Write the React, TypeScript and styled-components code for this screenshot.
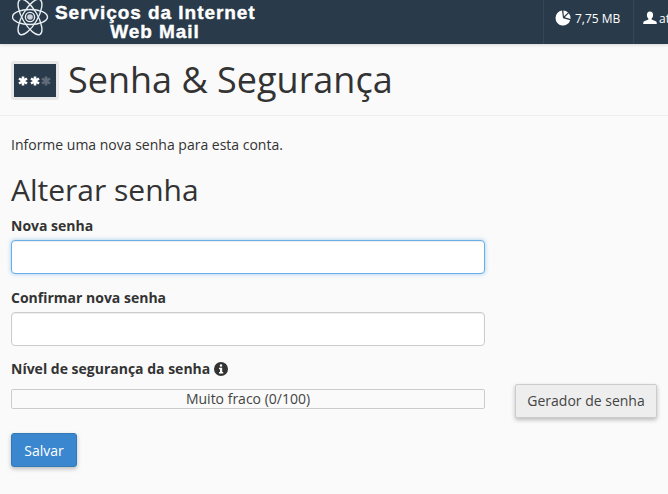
import React from "react";
import styled, { createGlobalStyle } from "styled-components";

const Global = createGlobalStyle`
  html, body { margin: 0; padding: 0; background: #fafafa; overflow: hidden; }
  body { font-family: "Open Sans", sans-serif; color: #333; font-size: 14px; }
  * { box-sizing: border-box; }
`;
const Page = styled.div`width: 668px; height: 494px; overflow: hidden;`;
const TopBar = styled.header`
  height: 44px; background: #293a4a; display: flex; align-items: stretch; justify-content: space-between;
  box-shadow: 0 1px 3px rgba(0,0,0,.15); overflow: hidden;
`;
const Brand = styled.div`display: flex; align-items: flex-start; padding-left: 12px;`;
const BrandText = styled.div`
  font-family: "Liberation Sans", Arial, sans-serif; font-weight: 700; color: #fff; font-size: 19px; line-height: 19px;
  text-align: center; letter-spacing: 0.95px; margin-left: 5px; padding-top: 3px; width: 200px; white-space: nowrap;
  -webkit-text-stroke: 0.4px #fff;
`;
const Stats = styled.div`display: flex; width: 125px; flex: none;`;
const Stat = styled.div<{ $w: number; $pad: number; $gap: number }>`
  width: ${p => p.$w}px; flex: none; border-left: 1px solid #34475a; color: #fff; font-size: 12px;
  display: flex; align-items: center; padding: 0 0 8px ${p => p.$pad}px; gap: ${p => p.$gap}px; white-space: nowrap; overflow: hidden;
  & > svg { flex: none; }
`;
const Main = styled.main`padding: 0 11px;`;
const TitleRow = styled.div`
  display: flex; align-items: center; gap: 9px; height: 72px; padding-top: 1px; margin: 0 -11px; padding-left: 11px;
  border-bottom: 1px solid #eee;
`;
const IconFrame = styled.div`
  width: 48px; height: 39px; background: #e8e8e8; border-radius: 3px; padding: 3px; flex: none;
`;
const IconScreen = styled.div`
  height: 33px; background: #293a4a; display: flex; align-items: center; justify-content: center; padding-top: 2px;
`;
const Title = styled.h1`margin: 0; font-size: 36px; font-weight: 400; line-height: 40px; color: #333;`;
const Intro = styled.p`margin: 19px 0 0; font-size: 14px; line-height: 20px;`;
const SubTitle = styled.h2`margin: 18px 0 0; font-size: 30px; font-weight: 400; line-height: 33px;`;
const Field = styled.div`margin-top: 10px; width: 474px; & + & { margin-top: 14px; }`;
const Label = styled.label`display: block; font-weight: 700; font-size: 14px; line-height: 20px; margin-bottom: 4px;`;
const Input = styled.div<{ $focus?: boolean }>`
  height: 34px; background: #fff; border: 1px solid ${p => p.$focus ? "#66afe9" : "#ccc"}; border-radius: 4px;
  box-shadow: ${p => p.$focus ? "inset 0 1px 1px rgba(0,0,0,.075), 0 0 4px rgba(102,175,233,.6)" : "inset 0 1px 1px rgba(0,0,0,.075)"};
`;
const StrengthRow = styled.div`display: flex; align-items: flex-start; margin-top: 13px;`;
const StrengthCol = styled.div`width: 474px; flex: none;`;
const StrengthLabel = styled(Label)`display: flex; align-items: center; gap: 4px; margin-bottom: 10px;`;
const Meter = styled.div`
  height: 20px; border: 1px solid #ccc; border-radius: 2px; text-align: center; font-size: 14px; line-height: 18px; color: #444;
`;
const GenButton = styled.button`
  margin: 25px 0 0 30px; width: 143px; height: 34px; background: #eee; border: 1px solid #ccc; border-radius: 2px;
  font: 400 14px "Open Sans", sans-serif; color: #444; box-shadow: 0 2px 4px rgba(0,0,0,.25); padding: 0 0 2px;
`;
const SaveButton = styled.button`
  display: block; margin-top: 15px; width: 66px; height: 34px; background: #3a87cf; border: 1px solid #337ab7; border-radius: 3px;
  font: 400 14px "Open Sans", sans-serif; color: #fff; box-shadow: 0 2px 4px rgba(0,0,0,.25); padding: 0;
`;

const Atom = () => (
  <svg width="38" height="44" viewBox="0 0 38 44" fill="none" stroke="#e8edf1" strokeWidth="1.4" style={{ flex: "none" }}>
    <ellipse cx="18" cy="17" rx="17.5" ry="7.5" />
    <ellipse cx="18" cy="17" rx="20" ry="7.5" transform="rotate(60 18 17)" />
    <ellipse cx="18" cy="17" rx="20" ry="7.5" transform="rotate(-60 18 17)" />
    <circle cx="18" cy="17" r="4.6" />
    <circle cx="18" cy="17" r="2.8" fill="#c9d2da" stroke="none" />
  </svg>
);
const Stars = () => (
  <svg width="34" height="12" viewBox="0 0 34 12" strokeWidth="2.6" strokeLinecap="butt">
    {[5, 17, 28].map((x, i) => (
      <g key={x} stroke={i === 2 ? "#5f6b76" : "#fff"}>
        <path d={`M${x} 1.5V10.5M${x - 4} 3.5L${x + 4} 8.5M${x - 4} 8.5L${x + 4} 3.5`} />
      </g>
    ))}
  </svg>
);
const Pie = () => (
  <svg width="16" height="16" viewBox="0 0 16 16" fill="#fff">
    <path d="M7 0.6A7.5 7.5 0 1 0 15.2 10.2L8 8.2Z" />
    <path d="M8.4 0.6A7.5 7.5 0 0 1 13 2.4L8.9 6.3Z" />
    <path d="M13.8 3.2A7.5 7.5 0 0 1 15.5 8.9L9.8 7.3Z" />
  </svg>
);
const User = () => (
  <svg width="14" height="14" viewBox="0 0 14 14" fill="#fff">
    <path d="M7 0.5C5 0.5 3.9 2 3.9 3.9 3.9 5.6 4.7 6.9 5.4 7.5V8.6L1.2 10.2C.4 10.5.2 11.5.2 13H13.8C13.8 11.5 13.6 10.5 12.8 10.2L8.6 8.6V7.5C9.3 6.9 10.1 5.6 10.1 3.9 10.1 2 9 .5 7 .5Z" />
  </svg>
);
const Info = () => (
  <svg width="14" height="14" viewBox="0 0 14 14">
    <circle cx="7" cy="7" r="7" fill="#333" />
    <rect x="5.9" y="2.4" width="2.2" height="2.2" fill="#fff" />
    <path d="M5 5.8H8.2V10H9.2V11.4H5V10H6V7.2H5Z" fill="#fff" />
  </svg>
);

export default function App() {
  return (
    <Page>
      <Global />
      <TopBar>
        <Brand>
          <Atom />
          <BrandText>Serviços da Internet<br />Web Mail</BrandText>
        </Brand>
        <Stats>
          <Stat $w={90} $pad={11} $gap={4}><Pie />7,75 MB</Stat>
          <Stat $w={35} $pad={9} $gap={2}><User />at</Stat>
        </Stats>
      </TopBar>
      <Main>
        <TitleRow>
          <IconFrame><IconScreen><Stars /></IconScreen></IconFrame>
          <Title>Senha &amp; Segurança</Title>
        </TitleRow>
        <Intro>Informe uma nova senha para esta conta.</Intro>
        <SubTitle>Alterar senha</SubTitle>
        <Field>
          <Label>Nova senha</Label>
          <Input $focus />
        </Field>
        <Field>
          <Label>Confirmar nova senha</Label>
          <Input />
        </Field>
        <StrengthRow>
          <StrengthCol>
            <StrengthLabel>Nível de segurança da senha <Info /></StrengthLabel>
            <Meter>Muito fraco (0/100)</Meter>
          </StrengthCol>
          <GenButton>Gerador de senha</GenButton>
        </StrengthRow>
        <SaveButton>Salvar</SaveButton>
      </Main>
    </Page>
  );
}
